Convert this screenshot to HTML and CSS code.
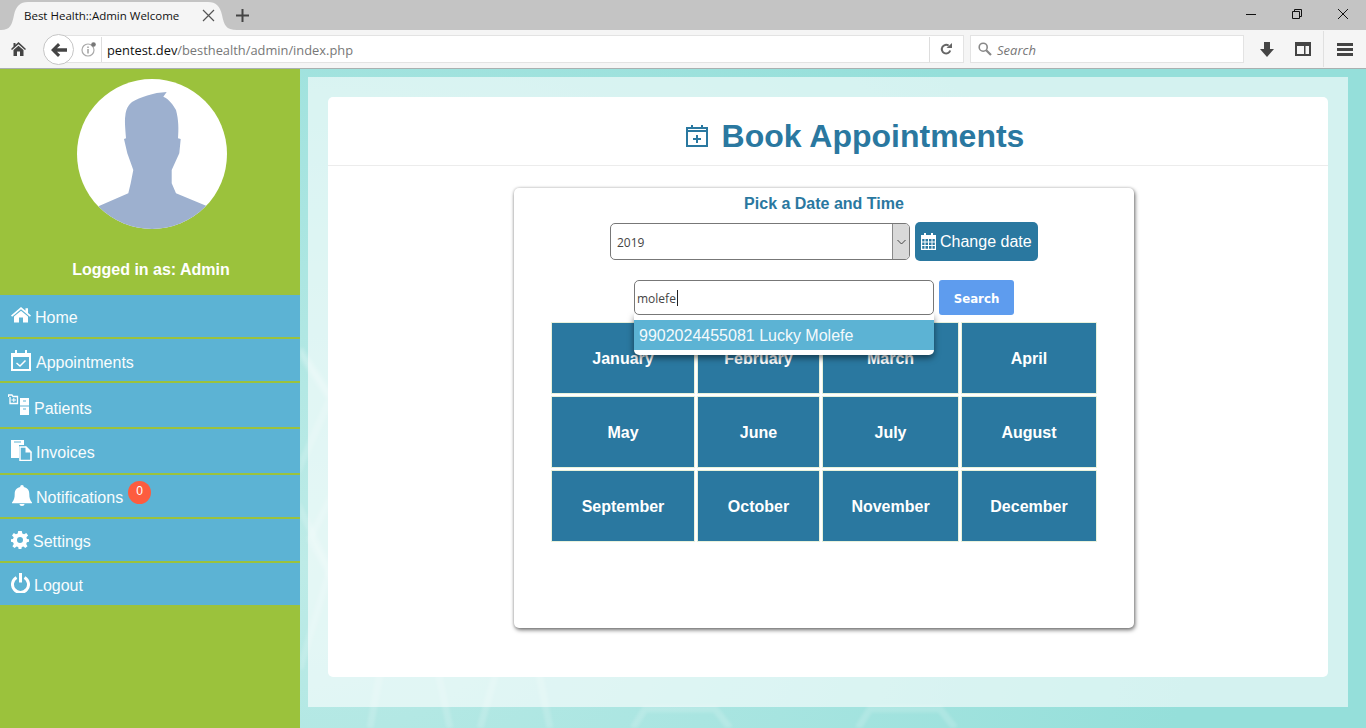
FILE: index.html
```html
<!DOCTYPE html>
<html lang="en">
<head>
<meta charset="utf-8">
<title>Best Health::Admin Welcome</title>
<link rel="stylesheet" href="styles.css">
</head>
<body>
<header class="browser">
  <div class="tabstrip">
    <div class="tab">
      <svg class="tab-shape" width="236" height="30" viewBox="0 0 236 30"><path d="M0 30C9 30 11 25 13 15 15 6 19 2 27 2H207C215 2 219 6 221 15 223 25 225 30 236 30Z" fill="#f5f5f5"/></svg>
      <span class="tab-title">Best Health::Admin Welcome</span>
      <svg class="tab-close" width="13" height="13" viewBox="0 0 13 13"><path d="M1 1L12 12M12 1L1 12" stroke="#555" stroke-width="1.2" fill="none"/></svg>
    </div>
    <svg class="new-tab" width="13" height="13" viewBox="0 0 13 13"><path d="M6.5 0V13M0 6.5H13" stroke="#444" stroke-width="2" fill="none"/></svg>
    <div class="win-controls">
      <svg width="12" height="12" viewBox="0 0 12 12"><path d="M1 6.5H11" stroke="#111" fill="none"/></svg>
      <svg width="12" height="12" viewBox="0 0 12 12"><path d="M1.5 3.5H8.5V10.5H1.5ZM3.5 3.5V1.5H10.5V8.5H8.5" stroke="#111" fill="none"/></svg>
      <svg width="12" height="12" viewBox="0 0 12 12"><path d="M1 1L11 11M11 1L1 11" stroke="#111" fill="none"/></svg>
    </div>
  </div>
  <div class="toolbar">
    <svg class="tb-home" width="15" height="14" viewBox="0 0 15 14"><path d="M7.5 0L15 7 14 8 7.5 2.2 1 8 0 7 2.5 4.6V1H4.5V2.8ZM2.5 8L7.5 3.7 12.5 8V14H9V9.5H6V14H2.5Z" fill="#444"/></svg>
    <div class="urlbar">
      <div class="back-btn"><svg width="16" height="14" viewBox="0 0 16 14"><path d="M7 0L9.2 2.2 6 5.2H16V8.8H6L9.2 11.8 7 14 0 7Z" fill="#444"/></svg></div>
      <svg class="info" width="15" height="15" viewBox="0 0 15 15"><circle cx="7" cy="8" r="6" fill="none" stroke="#aaa" stroke-width="1.2"/><path d="M7 7V11.5M7 4.4V6" stroke="#999" stroke-width="1.4"/><circle cx="12.5" cy="2.5" r="2.3" fill="#777"/></svg>
      <span class="url"><span class="url-host">pentest.dev</span>/besthealth/admin/index.php</span>
      <svg class="reload" width="12" height="12" viewBox="0 0 12 12"><path d="M10.2 7.5A4.3 4.3 0 1 1 8.6 2.6" fill="none" stroke="#666" stroke-width="2"/><path d="M6.5 5H12V0Z" fill="#666"/></svg>
    </div>
    <div class="searchbar">
      <svg width="14" height="14" viewBox="0 0 14 14"><circle cx="5.2" cy="5.2" r="4" fill="none" stroke="#888" stroke-width="1.6"/><path d="M8.2 8.2L13 13" stroke="#888" stroke-width="2.2"/></svg>
      <span class="search-label">Search</span>
    </div>
    <svg class="tb-down" width="14" height="15" viewBox="0 0 14 15"><path d="M4 0H10V7H14L7 15 0 7H4Z" fill="#444"/></svg>
    <svg class="tb-panel" width="16" height="14" viewBox="0 0 16 14"><path d="M1 1H15V13H1Z" fill="none" stroke="#444" stroke-width="2"/><path d="M1 1H15V4H1ZM9 1H10.500V13H9Z" fill="#444"/></svg>
    <span class="tb-sep"></span>
    <svg class="tb-menu" width="16" height="13" viewBox="0 0 16 13"><path d="M0 0H16V3H0ZM0 5H16V8H0ZM0 10H16V13H0Z" fill="#444"/></svg>
  </div>
</header>

<div class="app">
  <aside class="sidebar">
    <svg class="avatar" width="150" height="150" viewBox="0 0 150 150">
      <path fill="#9db0cf" d="M89.700 13L86.300 17.700C92 20 96.300 26 99 31 101.700 41 101.700 50 101 59.300L103.700 60 102.300 74.300 94.700 91 94.700 104.300 99 114.300 129.700 127 129.700 150H22V127L51.300 114.300 53.700 104.300 56.300 91 50.300 74.300 47 60 49 59.300C48.300 50 47.500 41 48.300 37 49 30 51.300 26 55 23 63 18.300 76.300 13.500 89.700 13Z"/>
    </svg>
    <p class="logged">Logged in as: Admin</p>
    <nav class="menu">
      <a class="item item-home"><svg width="20" height="16" viewBox="0 0 20 16"><path d="M10 0L14.500 3.800V1.200H17V6L20 8.500 18.900 9.700 10 2.300 1.100 9.700 0 8.500ZM10 3.700L17 9.500V15.500H12V10.500H8V15.500H3V9.500Z" fill="#fff"/></svg><span>Home</span></a>
      <a class="item item-appt"><svg width="20" height="21" viewBox="0 0 20 21"><path d="M1 4H19V20H1Z" fill="none" stroke="#fff" stroke-width="2"/><path d="M0 3H20V7H0Z M4 0H6V4H4ZM14 0H16V4H14Z" fill="#fff"/><path d="M5.500 13L9 16 14.500 10.500" fill="none" stroke="#fff" stroke-width="1.500"/></svg><span>Appointments</span></a>
      <a class="item item-pat"><svg width="22" height="21" viewBox="0 0 22 21"><path d="M0.500 3V1H4L5 2.500H9.500V9.500H2V3" fill="none" stroke="#fff" stroke-width="1.300"/><path d="M3.500 6H8M5.800 4V8" stroke="#fff"/><path d="M12 4H21V11.500H12ZM12 12.500H21V21H12Z" fill="#fff"/><path d="M15 7H18M15 15H18" stroke="#5cb3d4"/></svg><span>Patients</span></a>
      <a class="item item-inv"><svg width="21" height="21" viewBox="0 0 21 21"><path d="M0 0H13V5H8V18H0Z" fill="#fff"/><path d="M9 7H15L20 12V20.500H9Z" fill="#5cb3d4" stroke="#fff" stroke-width="1.500"/><path d="M14.500 6L21 12.500H14.500Z" fill="#fff"/><path d="M3 2H10" stroke="#5cb3d4"/></svg><span>Invoices</span></a>
      <a class="item item-not"><svg width="20" height="21" viewBox="0 0 20 21"><path d="M10 0C11.200 0 11.800 .8 11.800 2 15.800 3 17.300 5.500 17.300 9 17.300 13 18 15 20 17.500V18.300H0V17.500C2 15 2.700 13 2.700 9 2.700 5.500 4.200 3 8.200 2 8.200 .8 8.800 0 10 0ZM7.500 19H12.500C12.500 20.200 11.500 21 10 21 8.500 21 7.500 20.200 7.500 19Z" fill="#fff"/></svg><span>Notifications</span><b class="badge">0</b></a>
      <a class="item item-set"><svg width="18" height="18" viewBox="0 0 18 18"><path fill="#fff" fill-rule="evenodd" d="M7.200 0H10.800L11.300 2.500 13.100 3.300 15.300 1.900 17.100 4.400 15.400 6.200 15.900 8 18 8.300V10.700L15.900 11.200 15.200 13 16.500 15.200 14.300 17 12.400 15.500 10.800 16.100 10.400 18H7.600L7.200 16.100 5.500 15.500 3.600 17 1.400 15.200 2.800 13 2 11.200 0 10.700V8.300L2 8 2.700 6.200 1 4.400 2.800 1.900 4.900 3.300 6.700 2.500ZM9 6A3 3 0 1 0 9 12 3 3 0 1 0 9 6Z"/></svg><span>Settings</span></a>
      <a class="item item-log"><svg width="19" height="20" viewBox="0 0 19 20"><path d="M5.500 4.500A8 8 0 1 0 13.500 4.500" fill="none" stroke="#fff" stroke-width="3"/><path d="M9.500 0V9.500" stroke="#fff" stroke-width="3"/></svg><span>Logout</span></a>
    </nav>
  </aside>

  <main class="main">
    <svg class="hex-bg" width="1066" height="659" viewBox="0 0 1066 659">
      <g fill="none" stroke="#fff" stroke-opacity=".16" stroke-width="7">
        <path d="M-30 240L30 330-10 420M-10 420L30 500 0 600"/>
        <path d="M0 280L60 370 10 470 60 560"/>
        <path d="M88 560L70 659M129 560L150 659"/>
        <path d="M197 600L180 659M238 600L250 659"/>
        <path d="M333 659L345 640H415L430 659"/>
        <path d="M558 659L570 640H640L655 659"/>
      </g>
    </svg>
    <div class="panel">
      <section class="card">
        <h1 class="title">
          <svg width="22" height="22" viewBox="0 0 22 22"><path d="M1 3H21V21H1Z" fill="none" stroke="#2a78a0" stroke-width="2"/><path d="M0 5H22V7H0ZM5 0H7V4H5ZM15 0H17V4H15ZM10 10H12V18H10ZM7 13H15V15H7Z" fill="#2a78a0"/></svg>
          <span>Book Appointments</span>
        </h1>
        <div class="picker">
          <h2 class="pick-head">Pick a Date and Time</h2>
          <div class="date-row">
            <div class="select-wrap">
              <select class="year"><option>2019</option></select>
              <span class="select-arrow"><svg width="9" height="6" viewBox="0 0 9 6"><path d="M.5 1L4.500 5 8.500 1" fill="none" stroke="#444"/></svg></span>
            </div>
            <button class="change-btn" type="button">
              <svg width="15" height="17" viewBox="0 0 15 17"><path fill="#fff" fill-rule="evenodd" d="M3 0H5V2H10V0H12V2H15V17H0V2H3ZM1.200 6V8.500H3.500V6ZM4.500 6V8.500H7V6ZM8 6V8.500H10.500V6ZM11.500 6V8.500H13.800V6ZM1.200 9.500V12H3.500V9.500ZM4.500 9.500V12H7V9.500ZM8 9.500V12H10.500V9.500ZM11.500 9.500V12H13.800V9.500ZM1.200 13V15.800H3.500V13ZM4.500 13V15.800H7V13ZM8 13V15.800H10.500V13ZM11.500 13V15.800H13.800V13Z"/></svg>
              Change date
            </button>
          </div>
          <div class="search-row">
            <div class="search-wrap">
              <input class="search-input" type="text" value="molefe">
              <span class="caret"></span>
              <div class="suggest"><div class="suggest-item">9902024455081 Lucky Molefe</div></div>
            </div>
            <button class="search-btn" type="button">Search</button>
          </div>
          <div class="months">
            <div class="month">January</div><div class="month">February</div><div class="month">March</div><div class="month">April</div>
            <div class="month">May</div><div class="month">June</div><div class="month">July</div><div class="month">August</div>
            <div class="month">September</div><div class="month">October</div><div class="month">November</div><div class="month">December</div>
          </div>
        </div>
      </section>
    </div>
  </main>
</div>
</body>
</html>
```
FILE: styles.css
```css
* { box-sizing: border-box; }
html, body { margin: 0; padding: 0; height: 100%; overflow: hidden; }
body { font-family: "Liberation Sans", Arial, sans-serif; font-size: 16px; background: #fff; display: flex; flex-direction: column; }

/* browser chrome */
.browser { flex: none; height: 69px; font-family: "Open Sans", "Noto Sans", sans-serif; }
.tabstrip { height: 30px; background: #c4c4c4; display: flex; align-items: center; }
.tab { position: relative; width: 236px; height: 30px; margin-left: 1px; display: flex; align-items: center; }
.tab-shape { position: absolute; left: 0; top: 0; }
.tab-title { position: relative; margin-left: 23px; font-size: 11.500px; color: #111; white-space: nowrap; width: 178px; }
.tab-close { position: relative; }
.new-tab { margin-left: -1px; }
.win-controls { margin-left: auto; display: flex; gap: 34px; padding-right: 17px; margin-top: -3px; }
.toolbar { height: 39px; background: #f5f5f5; border-bottom: 1px solid #a9b0b0; display: flex; align-items: center; position: relative; }
.tb-home { margin-left: 11px; flex: none; }
.urlbar { margin-left: 33px; width: 905px; height: 28px; background: #fff; border: 1px solid #e3e3e3; border-left: 0; display: flex; align-items: center; position: relative; }
.back-btn { position: absolute; left: -16px; top: -2px; width: 31px; height: 31px; border-radius: 50%; background: #fff; border: 1px solid #c6c6c6; display: flex; align-items: center; justify-content: center; }
.info { margin-left: 22px; flex: none; }
.url { margin-left: 5px; padding: 1px 0 0 5px; border-left: 1px solid #ddd; font-size: 12.850px; line-height: 24px; color: #777; white-space: nowrap; width: 829px; border-right: 1px solid #ddd; }
.url-host { color: #111; }
.reload { margin-left: 10px; flex: none; }
.searchbar { margin-left: 6px; width: 274px; height: 28px; background: #fff; border: 1px solid #e3e3e3; display: flex; align-items: center; padding-left: 7px; gap: 5px; font-size: 13px; font-style: italic; color: #777; }
.search-label { padding-top: 2px; }
.tb-down { margin-left: 16px; flex: none; }
.tb-panel { margin-left: 21px; flex: none; }
.tb-sep { width: 1px; height: 36px; background: #e0e0e0; margin-left: 12px; flex: none; }
.tb-menu { margin-left: 13px; flex: none; }

/* layout */
.app { flex: 1; display: flex; min-height: 0; }
.sidebar { width: 300px; flex: none; background: #9bc23c; padding-top: 10px; }
.avatar { display: block; margin: 0 0 0 77px; background: #fff; border-radius: 50%; }
.logged { margin: 31px 0 0; height: 20px; line-height: 20px; text-align: center; color: #fff; font-weight: bold; font-size: 16px; width: 302px; }
.menu { margin-top: 14px; border-top: 1px solid #9bc23c; }
.item { position: relative; display: flex; align-items: center; background: #5cb3d4; color: #f8fcfd; border-bottom: 2px solid #9bc23c; padding-left: 11px; padding-top: 4px; height: 44px; }
.item span { display: block; line-height: 18px; }
.item svg { flex: none; }
.item-home svg { margin-right: 4px; margin-top: -6px; }
.item-appt svg { margin-right: 5px; margin-top: -4px; }
.item-appt span { margin-top: 1px; }
.item-pat { height: 46px; padding-left: 8px; }
.item-pat svg { margin-right: 4px; margin-top: -6px; }
.item-pat span { margin-top: 4px; }
.item-inv { height: 46px; }
.item-inv svg { margin-right: 4px; margin-top: -6px; }
.item-inv span { margin-top: -1px; }
.item-not svg { margin-left: 1px; margin-right: 4px; margin-top: -5px; }
.item-set svg { margin-right: 4px; margin-top: -4px; }
.item-log svg { margin-right: 4px; margin-top: -7px; }
.badge { position: absolute; left: 128px; top: 6px; width: 23px; height: 23px; border-radius: 50%; background: #fd5c3f; color: #fff; font-weight: normal; font-size: 12px; line-height: 21px; text-align: center; }

/* main */
.main { flex: 1; position: relative; padding: 8px 18px 21px 8px; background: radial-gradient(ellipse 900px 700px at 0 75%, #bdebe7 0%, #a9e5e1 50%, #95dfda 100%); min-width: 0; overflow: hidden; }
.hex-bg { position: absolute; left: 0; top: 0; filter: blur(1.500px); }
.panel { position: relative; height: 100%; padding: 20px 20px 30px; background: rgba(255, 255, 255, .6); }
.card { height: 100%; background: #fff; border-radius: 5px; }
.title { margin: 0; height: 69px; border-bottom: 1px solid #ececec; display: flex; align-items: center; justify-content: center; gap: 14px; font-size: 32px; font-weight: bold; color: #2a78a0; padding: 10px 0 0 54px; line-height: 37px; }
.picker { width: 620px; height: 440px; margin: 22px 0 0 186px; background: #fff; border-radius: 5px; box-shadow: 1px 2px 4px rgba(0, 0, 0, .55), 0 0 3px rgba(0, 0, 0, .2); padding-top: 7px; }
.pick-head { margin: 0; font-size: 16px; line-height: 18px; font-weight: bold; color: #2a78a0; text-align: center; }
.date-row { margin-top: 9px; display: flex; justify-content: center; align-items: center; gap: 5px; height: 39px; }
.select-wrap { position: relative; width: 300px; height: 37px; }
.year { width: 100%; height: 100%; appearance: none; -webkit-appearance: none; background: #fff; border: 1px solid #777; border-radius: 5px; padding: 1px 6px 0; font-family: "Open Sans", "Noto Sans", sans-serif; font-size: 12px; color: #444; }
.select-arrow { position: absolute; right: 1px; top: 1px; bottom: 1px; width: 17px; background: #d9d9d9; border-left: 1px solid #8a8a8a; border-radius: 0 4px 4px 0; display: flex; align-items: center; justify-content: center; }
.change-btn { width: 123px; height: 39px; background: #2a78a0; color: #fff; border: 0; border-radius: 5px; padding: 0 0 0 6px; font-family: "Liberation Sans", Arial, sans-serif; font-size: 16px; display: flex; align-items: center; gap: 4px; white-space: nowrap; }
.search-row { margin-top: 19px; display: flex; justify-content: center; gap: 5px; height: 35px; }
.search-wrap { position: relative; width: 300px; height: 35px; }
.search-input { position: relative; z-index: 2; width: 100%; height: 100%; background: #fff; border: 1px solid #777; border-radius: 5px; padding: 1px 2px 0; font-family: "Open Sans", "Noto Sans", sans-serif; font-size: 12px; color: #444; }
.caret { position: absolute; z-index: 3; left: 43px; top: 10px; width: 1px; height: 16px; background: #222; }
.suggest { position: absolute; z-index: 1; left: 0; top: 34px; width: 300px; padding: 6px 0 5px; background: #fff; border-radius: 0 0 5px 5px; box-shadow: 0 3px 6px rgba(0, 0, 0, .5); }
.suggest-item { height: 30px; line-height: 32px; padding-left: 5px; background: #5cb3d4; color: #f4fafc; font-size: 16px; }
.search-btn { width: 75px; height: 35px; background: #5e9cee; color: #fff; border: 0; border-radius: 3px; font-family: "DejaVu Sans", sans-serif; font-size: 11.800px; font-weight: bold; padding: 3px 0 0; }
.months { margin: 7px 0 0 37px; width: 546px; display: grid; grid-template-columns: 144px 123px 137px 136px; grid-auto-rows: 72px; gap: 2px; }
.month { background: #2a78a0; border: 1px solid #e9f2dc; color: #fff; font-weight: bold; font-size: 16px; display: flex; align-items: center; justify-content: center; padding-top: 2px; }
```
